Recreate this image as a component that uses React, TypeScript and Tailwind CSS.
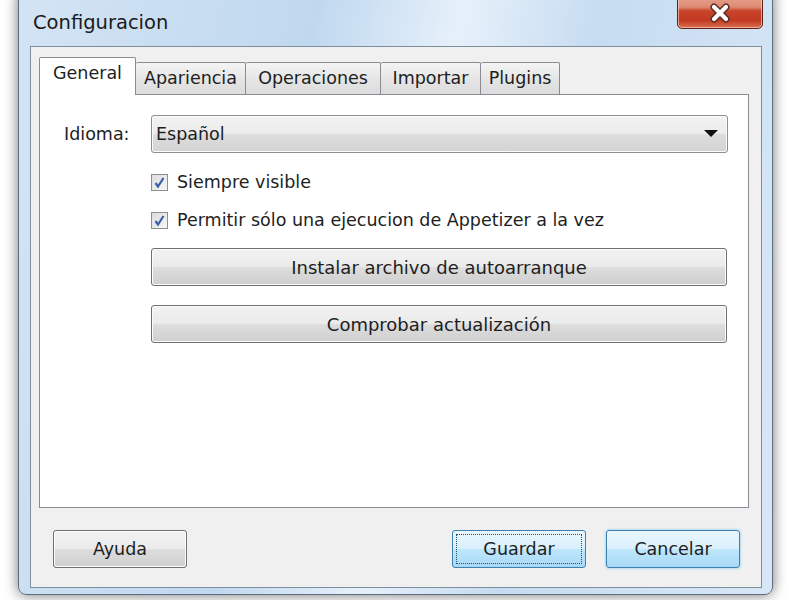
const font = { fontFamily: '"DejaVu Sans", Verdana, sans-serif' };

const tabs = [
  { label: "General", w: "w-[97px]" },
  { label: "Apariencia", w: "w-[110px]" },
  { label: "Operaciones", w: "w-[135px]" },
  { label: "Importar", w: "w-[100px]" },
  { label: "Plugins", w: "w-[79px]" },
];

const btn =
  "h-[38px] rounded-[3px] border border-[#707070] bg-[linear-gradient(#f2f2f2,#ebebeb_48%,#dddddd_52%,#cfcfcf)] text-[#1e1e1e] flex items-center justify-center shadow-[inset_0_0_0_1px_#fcfcfc]";

const Check = ({ label }: { label: string }) => (
  <div className="flex items-center gap-[9px] h-[18px]">
    <div className="w-[17px] h-[17px] border border-[#8f8f8f] bg-[linear-gradient(135deg,#dcdcdc,#f7f7f7)] flex items-center justify-center">
      <svg width="13" height="13" viewBox="0 0 13 13">
        <path d="M2.5 7 L5 10.5 L10.5 2" fill="none" stroke="#3b5ea8" strokeWidth="2.2" />
      </svg>
    </div>
    <span className="text-[17.5px] text-[#1e1e1e]">{label}</span>
  </div>
);

export default function App() {
  return (
    <div className="w-[800px] h-[600px] bg-white overflow-hidden relative" style={font}>
      <div className="absolute left-[18px] top-[-12px] w-[755px] h-[607px] rounded-[8px] border border-[#5b6d80] bg-[linear-gradient(100deg,#d3e4f4,#c0d8ef_35%,#e6f0fa_52%,#c7dcf1_68%,#d8e7f6)] shadow-[0_0_14px_rgba(0,0,0,0.55)] pt-[57px] pl-[11px] pr-[10px] pb-[6px] flex flex-col">
        <div className="absolute left-[14px] top-[19px] text-[19.5px] text-[#1a1a1a]">Configuracion</div>
        <div className="absolute left-[658px] top-[0px] w-[86px] h-[40px] rounded-b-[5px] border border-[#5e2219] bg-[linear-gradient(#eab0a0,#de8a72_45%,#c9432a_55%,#c23a22_80%,#d9704f)] flex items-end justify-center pb-[5px] shadow-[inset_0_0_0_1px_rgba(255,220,210,0.6)]">
          <svg width="24" height="20" viewBox="0 0 24 20">
            <path d="M6 4 L18 16 M18 4 L6 16" stroke="#5a2a22" strokeWidth="7" strokeLinecap="round" />
            <path d="M6 4 L18 16 M18 4 L6 16" stroke="#ffffff" strokeWidth="4.2" strokeLinecap="round" />
          </svg>
        </div>

        <div className="flex-1 bg-[#f0f0f0] border border-[#7f8e9c] pt-[9px] pl-[8px] pr-[12px] flex flex-col">
          <div className="flex items-end h-[38px]">
            {tabs.map((t, i) =>
              i === 0 ? (
                <div
                  key={t.label}
                  className={`${t.w} h-[38px] bg-white border border-b-0 border-[#898c95] rounded-t-[2px] text-[17.5px] text-[#1e1e1e] flex items-center justify-center pb-[6px] relative z-10 -mb-px`}
                >
                  {t.label}
                </div>
              ) : (
                <div
                  key={t.label}
                  className={`${t.w} h-[32px] bg-[linear-gradient(#f4f4f4,#e6e6e6_50%,#dcdcdc)] border border-b-0 border-[#898c95] border-l-0 rounded-t-[2px] text-[17.5px] text-[#1e1e1e] flex items-center justify-center`}
                >
                  {t.label}
                </div>
              )
            )}
          </div>
          <div className="h-[414px] bg-white border border-[#898c95] pl-[24px] pt-[20px]">
            <div className="flex items-center h-[38px]">
              <span className="w-[87px] text-[17.5px] text-[#1e1e1e]">Idioma:</span>
              <div className="w-[577px] h-[38px] rounded-[3px] border border-[#8e8f8f] bg-[linear-gradient(#f3f3f3,#ebebeb_48%,#dddddd_52%,#d3d3d3)] shadow-[inset_0_0_0_1px_#fafafa] flex items-center justify-between pl-[4px] pr-[9px]">
                <span className="text-[17.5px] text-[#1e1e1e]">Español</span>
                <svg width="14" height="8" viewBox="0 0 14 8">
                  <path d="M0 0 L14 0 L7 7 Z" fill="#111" />
                </svg>
              </div>
            </div>
            <div className="pl-[87px] pt-[20px] flex flex-col gap-[20px]">
              <Check label="Siempre visible" />
              <Check label="Permitir sólo una ejecucion de Appetizer a la vez" />
            </div>
            <div className="pl-[87px] pt-[19px] flex flex-col gap-[19px] w-[663px]">
              <div className={`${btn} text-[18px]`}>Instalar archivo de autoarranque</div>
              <div className={`${btn} text-[18px]`}>Comprobar actualización</div>
            </div>
          </div>
          <div className="flex items-center mt-[22px] pl-[14px] pr-[9px]">
            <div className={`${btn} w-[134px] text-[17.5px]`}>Ayuda</div>
            <div className="flex-1" />
            <div className="w-[134px] h-[38px] rounded-[3px] border border-[#3c7fb1] bg-[linear-gradient(#eaf6fd,#d9f0fc_48%,#bee6fd_52%,#a7d9f5)] p-[3px]">
              <div className="w-full h-full border border-dotted border-[#2a4a5e] flex items-center justify-center text-[17.5px] text-[#1e1e1e]">Guardar</div>
            </div>
            <div className="w-[134px] h-[38px] ml-[20px] rounded-[3px] border border-[#3c7fb1] bg-[linear-gradient(#eaf6fd,#d9f0fc_48%,#bee6fd_52%,#a7d9f5)] shadow-[0_0_3px_#6ec4f0] flex items-center justify-center text-[17.5px] text-[#1e1e1e]">Cancelar</div>
          </div>
        </div>
      </div>
    </div>
  );
}
